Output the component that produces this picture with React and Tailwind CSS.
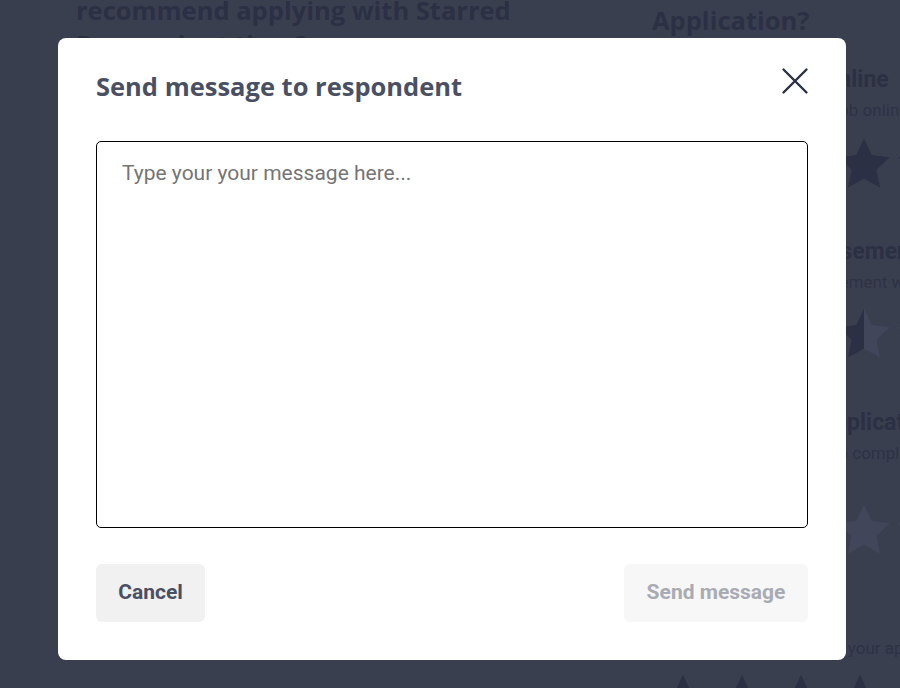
import React from 'react';

const Star = ({ fill = 'full', size = 60, id = 's' }) => {
  const d = 'M12 1.8l3.1 6.6 7.2.9-5.3 5 1.4 7.1L12 17.9l-6.4 3.5 1.4-7.1-5.3-5 7.2-.9z';
  return (
    <svg width={size} height={size} viewBox="0 0 24 24" className="shrink-0">
      <defs>
        <clipPath id={id}>
          <rect x="0" y="0" width="12" height="24" />
        </clipPath>
      </defs>
      {fill === 'full' && <path d={d} fill="#2b3044" />}
      {fill === 'half' && (
        <>
          <path d={d} fill="#41465a" />
          <path d={d} fill="#2b3044" clipPath={`url(#${id})`} />
        </>
      )}
      {fill === 'empty' && <path d={d} fill="#41465a" />}
    </svg>
  );
};

function Background() {
  const items = [
    {
      title: 'Apply online', sub: 'Apply to the job online',
      stars: ['full', 'full', 'full', 'full', 'half'],
      wrap: 'mt-[29px]', tpl: 'pl-[109px]', spl: 'pl-[89px]', starMt: 'mt-[9px]',
    },
    {
      title: 'Job advertisement', sub: 'Job advertisement was clear',
      stars: ['full', 'full', 'full', 'half', 'empty'],
      wrap: 'mt-[43px]', tpl: 'pl-[72px]', spl: 'pl-[94px]', starMt: 'mt-[7px]',
    },
    {
      title: 'Application', sub: 'Easy to complete',
      stars: ['full', 'full', 'full', 'empty', 'empty'],
      wrap: 'mt-[44px]', tpl: 'pl-[167px]', spl: 'pl-[141px]', starMt: 'mt-[32px]',
    },
  ];
  return (
    <div className="flex h-[688px] w-[900px] overflow-hidden bg-[#3a3f4f]" style={{ fontFamily: 'Roboto, "Liberation Sans", sans-serif' }}>
      <div className="w-[40px] shrink-0 bg-[#393e4e]" />
      <div className="w-[575px] shrink-0 pl-[36px]">
        <div className="-mt-[7px] text-[25.5px] font-bold leading-[34px] text-[#2b3044]" style={{ fontFamily: '"Open Sans", sans-serif' }}>
          recommend applying with Starred<br />Respondent than?
        </div>
      </div>
      <div className="flex-1 pl-[37px]">
        <div className="mt-[4px] text-[25.5px] font-bold leading-[32px] text-[#2b3044]" style={{ fontFamily: '"Open Sans", sans-serif' }}>
          Application?
        </div>
        {items.map((it, i) => (
          <div key={i} className={it.wrap}>
            <div className={`text-[23px] font-bold leading-[30px] text-[#2b3044] whitespace-nowrap ${it.tpl}`}>{it.title}</div>
            <div className={`text-[17px] leading-[30px] text-[#2d3246] whitespace-nowrap ${it.spl}`}>{it.sub}</div>
            <div className={`flex pl-[2px] ${it.starMt}`}>
              {it.stars.map((s, j) => (
                <Star key={j} fill={s} id={`h${i}${j}`} />
              ))}
            </div>
          </div>
        ))}
        <div className="mt-[73px] text-[17px] leading-[30px] text-[#2d3246] whitespace-nowrap pl-[95px]">Tell us about your application</div>
        <div className="mt-[8px] flex gap-[9px] pl-[6px]">
          {[0, 1, 2, 3].map((j) => (
            <Star key={j} fill="full" size={50} id={`b${j}`} />
          ))}
        </div>
      </div>
    </div>
  );
}

export default function App() {
  return (
    <div className="relative h-[688px] w-[900px] overflow-hidden">
      <Background />
      <div className="absolute inset-0 flex items-start justify-start pl-[58px] pt-[38px]">
        <div className="flex h-[622px] w-[788px] flex-col rounded-[8px] bg-white px-[38px] pt-[30px] pb-[38px]">
          <div className="flex items-start justify-between">
            <h2 className="text-[25.5px] font-bold leading-[36px] text-[#4a5064]" style={{ fontFamily: '"Open Sans", sans-serif' }}>
              Send message to respondent
            </h2>
            <button className="-mt-[2px] mr-[-2px] flex h-[30px] w-[30px] items-center justify-center">
              <svg width="28" height="28" viewBox="0 0 28 28" fill="none" stroke="#2b3044" strokeWidth="2.4" strokeLinecap="round">
                <path d="M2.5 2.5 L25.5 25.5 M25.5 2.5 L2.5 25.5" />
              </svg>
            </button>
          </div>
          <textarea
            className="mt-[37px] h-[387px] w-full resize-none rounded-[5px] border-[1.5px] border-black px-[25px] pt-[16px] pb-[16px] text-[21px] leading-[30px] text-[#333] placeholder:text-[#757575] outline-none"
            style={{ fontFamily: 'Roboto, "Liberation Sans", sans-serif' }}
            placeholder="Type your your message here..."
          />
          <div className="mt-auto flex items-center justify-between" style={{ fontFamily: 'Roboto, "Liberation Sans", sans-serif' }}>
            <button className="h-[58px] w-[109px] rounded-[6px] bg-[#f1f1f1] text-[21px] font-bold text-[#4a5064]">Cancel</button>
            <button className="h-[58px] w-[184px] rounded-[6px] bg-[#f7f7f7] text-[21px] font-bold text-[#a9abb4]">Send message</button>
          </div>
        </div>
      </div>
    </div>
  );
}
